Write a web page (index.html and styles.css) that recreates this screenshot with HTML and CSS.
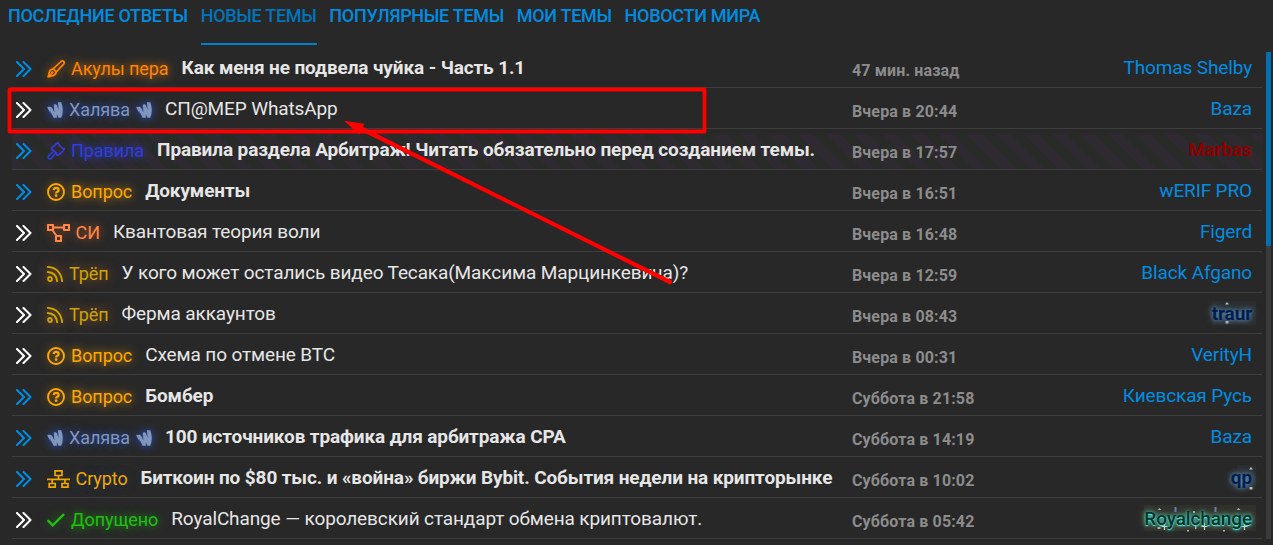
FILE: index.html
```
<!DOCTYPE html>
<html lang="ru">
<head>
<meta charset="utf-8">
<title>Новые темы</title>
<link rel="stylesheet" href="styles.css">
</head>
<body>
<svg class="sprite" aria-hidden="true">
  <symbol id="angles" viewBox="0 0 16 16"><path d="M1 1l7 7-7 7M7.500 1l7 7-7 7" fill="none" stroke="currentColor" stroke-width="2.100" stroke-linecap="round" stroke-linejoin="round"/></symbol>
  <symbol id="brush" viewBox="0 0 18 18"><path d="M6.200 8.900L14 1.500q1.500-1.200 2.700-.1 1.100 1.200-.1 2.700L9.200 12M6.200 8.900q-3.100.3-3.800 3.200L1.100 16.900l4.800-1.300q3.200-.8 3.300-3.800M6.200 8.900L9.200 11.900M1.300 16.700l3.200-3.200" fill="none" stroke="currentColor" stroke-width="1.700" stroke-linejoin="round"/><circle cx="5.300" cy="12.600" r="1.300" fill="currentColor"/></symbol>
  <symbol id="wallet" viewBox="0 0 16 16"><path d="M.2 5Q3.800 4 5.200 6L7.400 10.500 6.800 2.800Q8.800 1.600 9.900 3.200L11.600 8 11 .2h3.300q1.500 4 1.500 8t-1.500 7.600h-2.800L9.900 12.200V15.800H7.200L2.800 7.200 3.600 11.500 .8 6.500Z" fill="currentColor"/><path d="M3 7l4.300 8.500" fill="none" stroke="currentColor" stroke-width="1.500"/></symbol>
  <symbol id="gavel" viewBox="0 0 18 18"><path d="M9.200 1.800l2-1.200.7 2.100 3.500 3.500 2 .7-1.200 1.900-4.100 3.900-2 .5-.6-2-3-3-2-.6.6-2zM9.300 10.300l-4.800 6q-1.500 1.100-2.700-.1t0-2.600l5.700-5.100" fill="none" stroke="currentColor" stroke-width="1.600" stroke-linejoin="round"/></symbol>
  <symbol id="question" viewBox="0 0 18 18"><circle cx="9" cy="9" r="8" fill="none" stroke="currentColor" stroke-width="1.900"/><path d="M6.600 7Q7 4.900 9.100 4.900q2.500 0 2.500 2 0 1.200-1.200 1.800-1.300.6-1.300 1.700" fill="none" stroke="currentColor" stroke-width="2.200"/><circle cx="9.100" cy="12.700" r="1.350" fill="currentColor"/></symbol>
  <symbol id="nodes" viewBox="0 0 23 18"><path d="M1 1h5v5H1zM17 1h5v5h-5zM9 12h5v5H9zM6 3.500h11M5.300 6l4.400 6" fill="none" stroke="currentColor" stroke-width="2.100" stroke-linejoin="round"/></symbol>
  <symbol id="feed" viewBox="0 0 16 16"><path d="M.5.900Q13.500 1.800 15.200 15.400M.5 6Q9.400 6.500 10.200 15.400" fill="none" stroke="currentColor" stroke-width="1.900" stroke-linecap="round"/><circle cx="3" cy="13" r="2" fill="none" stroke="currentColor" stroke-width="1.800"/></symbol>
  <symbol id="sitemap" viewBox="0 0 23 18"><path d="M8 .8h7v4.700H8zM2.200 13.500h6v3.700h-6zM15 13.500h6v3.700h-6zM0 9.300h23M11.500 5.500v3.800M5.200 9.300v4.200M18 9.300v4.200" fill="none" stroke="currentColor" stroke-width="1.700"/></symbol>
  <symbol id="check" viewBox="0 0 17 14"><path d="M1.200 7.800l4.200 4.200L15.600 2" fill="none" stroke="currentColor" stroke-width="2.200" stroke-linecap="round"/></symbol>
</svg>

<nav class="tabs">
  <a class="tab">ПОСЛЕДНИЕ ОТВЕТЫ</a>
  <a class="tab tab-active">НОВЫЕ ТЕМЫ</a>
  <a class="tab">ПОПУЛЯРНЫЕ ТЕМЫ</a>
  <a class="tab">МОИ ТЕМЫ</a>
  <a class="tab">НОВОСТИ МИРА</a>
</nav>

<div class="feed">
  <main class="topics">
    <div class="row unread"><svg class="go"><use href="#angles"/></svg><span class="tag orange"><svg class="i18"><use href="#brush"/></svg>Акулы пера</span><a class="title">Как меня не подвела чуйка - Часть 1.1</a><time>47 мин. назад</time><a class="author">Thomas Shelby</a></div>
    <div class="row"><svg class="go"><use href="#angles"/></svg><span class="tag steel"><svg class="i16"><use href="#wallet"/></svg>Халява<svg class="i16"><use href="#wallet"/></svg></span><a class="title">СП@МЕР WhatsApp</a><time>Вчера в 20:44</time><a class="author">Baza</a></div>
    <div class="row unread striped"><svg class="go"><use href="#angles"/></svg><span class="tag indigo"><svg class="i18"><use href="#gavel"/></svg>Правила</span><a class="title">Правила раздела Арбитраж! Читать обязательно перед созданием темы.</a><time>Вчера в 17:57</time><a class="author banned">Marbas</a></div>
    <div class="row unread"><svg class="go"><use href="#angles"/></svg><span class="tag amber"><svg class="i18"><use href="#question"/></svg>Вопрос</span><a class="title">Документы</a><time>Вчера в 16:51</time><a class="author">wERIF PRO</a></div>
    <div class="row"><svg class="go"><use href="#angles"/></svg><span class="tag coral"><svg class="i23"><use href="#nodes"/></svg>СИ</span><a class="title">Квантовая теория воли</a><time>Вчера в 16:48</time><a class="author">Figerd</a></div>
    <div class="row"><svg class="go"><use href="#angles"/></svg><span class="tag gold"><svg class="i16"><use href="#feed"/></svg>Трёп</span><a class="title">У кого может остались видео Тесака(Максима Марцинкевича)?</a><time>Вчера в 12:59</time><a class="author">Black Afgano</a></div>
    <div class="row"><svg class="go"><use href="#angles"/></svg><span class="tag gold"><svg class="i16"><use href="#feed"/></svg>Трёп</span><a class="title">Ферма аккаунтов</a><time>Вчера в 08:43</time><a class="author navy"><svg class="sparks" viewBox="0 0 46 30"><path d="M0 4h44v24H0z" fill="#2c2e2f"/><path d="M15 5l2 2.500h-4zM13.500 24h3v2.500h-3z" fill="#c4c4c4"/></svg><span>traur</span></a></div>
    <div class="row"><svg class="go"><use href="#angles"/></svg><span class="tag amber"><svg class="i18"><use href="#question"/></svg>Вопрос</span><a class="title">Схема по отмене BTC</a><time>Вчера в 00:31</time><a class="author">VerityH</a></div>
    <div class="row unread"><svg class="go"><use href="#angles"/></svg><span class="tag amber"><svg class="i18"><use href="#question"/></svg>Вопрос</span><a class="title">Бомбер</a><time>Суббота в 21:58</time><a class="author">Киевская Русь</a></div>
    <div class="row unread"><svg class="go"><use href="#angles"/></svg><span class="tag steel"><svg class="i16"><use href="#wallet"/></svg>Халява<svg class="i16"><use href="#wallet"/></svg></span><a class="title">100 источников трафика для арбитража CPA</a><time>Суббота в 14:19</time><a class="author">Baza</a></div>
    <div class="row unread"><svg class="go"><use href="#angles"/></svg><span class="tag crypto"><svg class="i23"><use href="#sitemap"/></svg>Crypto</span><a class="title">Биткоин по $80 тыс. и «война» биржи Bybit. События недели на крипторынке</a><time>Суббота в 10:02</time><a class="author navy"><svg class="sparks sparks-short" viewBox="19 0 27 30"><path d="M25 4h19v24H25z" fill="#2c2e2f"/><path d="M39 6l2 2.500h-4zM37.500 26h3v2.500h-3z" fill="#c4c4c4"/></svg><span>qp</span></a></div>
    <div class="row"><svg class="go"><use href="#angles"/></svg><span class="tag green"><svg class="i18"><use href="#check"/></svg>Допущено</span><a class="title">RoyalChange — королевский стандарт обмена криптовалют.</a><time>Суббота в 05:42</time><a class="author royal"><svg class="sparks sparks-long" viewBox="0 0 114 30">
      <path d="M0 3h112v26H0z" fill="#30302c"/>
      <path d="M30.500 5h2v5h-2zM70.500 5h2v5h-2z" fill="#7078b8"/>
      <path d="M15.500 6l2 2h-4zM49 9h2v2h-2zM94.500 6l2 2h-4zM13.500 25h3v2h-3zM51 24h1.500v3H51zM43 28h2v1.500h-2zM79 28h2v1.500h-2z" fill="#b4b4a8"/>
      <path d="M20.500 21v7M17.500 24.500h6M60.500 21v7M57.500 24.500h6M100.500 21v7M97.500 24.500h6" fill="none" stroke="#d8e8e4" stroke-width="1.200"/></svg><span>Royalchange</span></a></div>
  </main>
  <div class="scrollbar"><div class="thumb"></div></div>
</div>

<svg class="marker" viewBox="0 0 1273 545" aria-hidden="true">
  <rect x="9.500" y="89.500" width="695" height="42" fill="none" stroke="#f00" stroke-width="3.800" stroke-linejoin="round"/>
  <path d="M670 282L359 127.500" stroke="#f00" stroke-width="4.200" stroke-linecap="round"/>
  <path d="M344 120.700l20.300 3-5 11z" fill="#f00"/>
</svg>
</body>
</html>
```
FILE: styles.css
```
* { box-sizing: border-box; }
body {
  margin: 0;
  height: 545px;
  overflow: hidden;
  background: #282828;
  font-family: Roboto, "Noto Sans", sans-serif;
  color: #e6e6e6;
}
.sprite { position: absolute; width: 0; height: 0; }

.tabs { display: flex; gap: 12.800px; height: 47px; padding-left: 8px; }
.tab {
  height: 45px;
  line-height: 32px;
  font-size: 18px;
  font-weight: 500;
  letter-spacing: -0.3px;
  color: #008de0;
  white-space: nowrap;
}
.tab-active { color: #0075ba; border-bottom: 2px solid #0080cc; }

.feed { display: flex; justify-content: space-between; padding-left: 12px; }
.topics { width: 1250px; }
.row {
  display: flex;
  height: 41px;
  padding-right: 10px;
  border-bottom: 1px solid #3e3e3e;
  line-height: 40px;
  white-space: nowrap;
}
.striped {
  background: repeating-linear-gradient(45deg, #2f2a32 0 10px, #292b29 10px 20px) 0 100% / 100% 35px no-repeat;
}
.go { width: 16px; height: 16px; margin: 14px 15px 0 4px; color: #fff; flex: none; }
.unread .go { color: #008de0; }

.tag {
  display: flex;
  align-items: center;
  gap: 6px;
  height: 40px;
  padding-top: 3px;
  margin-right: 13px;
  font-size: 18px;
  letter-spacing: -0.08px;
}
.tag svg { flex: none; overflow: visible; }
.i16 { width: 16px; height: 16px; }
.i18 { width: 18px; height: 18px; }
.i23 { width: 23px; height: 18px; }
.orange { color: #ff8400; text-shadow: 0 0 10px #ff8400; }
.steel { color: #8196bd; text-shadow: 0 0 10px #2454d8; }
.indigo { color: #303edb; text-shadow: 0 0 10px #303edb; }
.amber { color: #ffa800; text-shadow: 0 0 10px #e09600; }
.coral { color: #ff8848; text-shadow: 0 0 10px #c65c28; }
.gold { color: #cda500; text-shadow: 0 0 12px #a85a30; }
.crypto { color: #f0a800; text-shadow: 0 0 10px #26345c; }
.green { color: #20c010; text-shadow: 0 0 10px #20a010; }
.coral, .crypto { gap: 5.500px; }
.orange svg { filter: drop-shadow(0 0 5px #ff840099); }
.steel svg { filter: drop-shadow(0 0 5px #2454d8); }
.amber svg { filter: drop-shadow(0 0 5px #e0960099); }
.coral svg { filter: drop-shadow(0 0 5px #c65c2899); }
.gold svg { filter: drop-shadow(0 0 6px #a85a30); }
.green svg { filter: drop-shadow(0 0 5px #20a01099); }

.title { padding-top: 1px; font-size: 19px; letter-spacing: -0.12px; }
.unread .title { font-weight: 700; }
time {
  width: 180px;
  margin-left: auto;
  padding-top: 4px;
  font-size: 16px;
  font-weight: 700;
  letter-spacing: 0.14px;
  color: #8c8c8c;
}
.author {
  position: relative;
  display: block;
  width: 220px;
  padding-top: 1px;
  text-align: right;
  font-size: 19px;
  letter-spacing: -0.13px;
  color: #008de0;
}
.banned { font-weight: 700; color: #8b0000; }
.navy { font-weight: 700; color: #001d50; text-shadow: 0 0 5px #6aa0c8, 0 0 9px #4a6a80; }
.royal { font-weight: 500; color: #003329; text-shadow: 0 1px 1px #52efe0, 0 0 4px #58e8d8, 0 0 9px #6a8a60; }
.author span { position: relative; }
.sparks { position: absolute; top: 4px; right: -6px; width: 46px; height: 30px; }
.sparks-short { width: 27px; }
.sparks-long { width: 114px; }

.scrollbar { width: 5px; height: 487px; margin-top: 5px; margin-right: 2px; background: #3b3b3b; }
.thumb { height: 194px; background: #0070b4; }
.marker { position: absolute; left: 0; top: 0; width: 1273px; height: 545px; pointer-events: none; }
```
